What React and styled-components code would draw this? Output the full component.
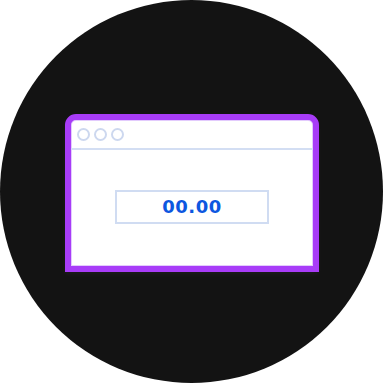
import React from 'react'
import styled, { createGlobalStyle } from 'styled-components'

const Global = createGlobalStyle`
  html, body {
    margin: 0;
    padding: 0;
    background: #ffffff;
  }
`

const Circle = styled.div`
  width: 383px;
  height: 383px;
  border-radius: 50%;
  background: #131313;
  display: flex;
  align-items: center;
  justify-content: center;
`

const Window = styled.div`
  width: 254px;
  height: 158px;
  margin-top: 3px;
  margin-left: 1px;
  box-sizing: border-box;
  border: 6px solid #a83cf8;
  border-radius: 11px 11px 0 0;
  background: #ffffff;
  box-shadow: inset 0 0 0 1px #e3cbfd, 0 3px 4px rgba(255, 255, 255, 0.03);
  display: flex;
  flex-direction: column;
  overflow: hidden;
`

const TitleBar = styled.div`
  height: 30px;
  flex-shrink: 0;
  border-bottom: 2px solid #d3def3;
  display: flex;
  align-items: center;
  gap: 4px;
  padding-left: 6px;
  box-sizing: border-box;
`

const Dot = styled.span`
  width: 13px;
  height: 13px;
  border-radius: 50%;
  box-sizing: border-box;
  border: 2px solid #cdd8ef;
`

const Body = styled.div`
  flex: 1;
  display: flex;
  align-items: center;
  justify-content: center;
  padding-bottom: 3px;
`

const Field = styled.div`
  width: 154px;
  height: 34px;
  box-sizing: border-box;
  border: 2px solid #d0dcf2;
  display: flex;
  align-items: center;
  justify-content: center;
  font-family: 'DejaVu Sans', sans-serif;
  font-weight: bold;
  font-size: 18px;
  letter-spacing: 0.5px;
  color: #0d57e0;
`

export default function App() {
  return (
    <>
      <Global />
      <Circle>
        <Window>
          <TitleBar>
            <Dot />
            <Dot />
            <Dot />
          </TitleBar>
          <Body>
            <Field>00.00</Field>
          </Body>
        </Window>
      </Circle>
    </>
  )
}
